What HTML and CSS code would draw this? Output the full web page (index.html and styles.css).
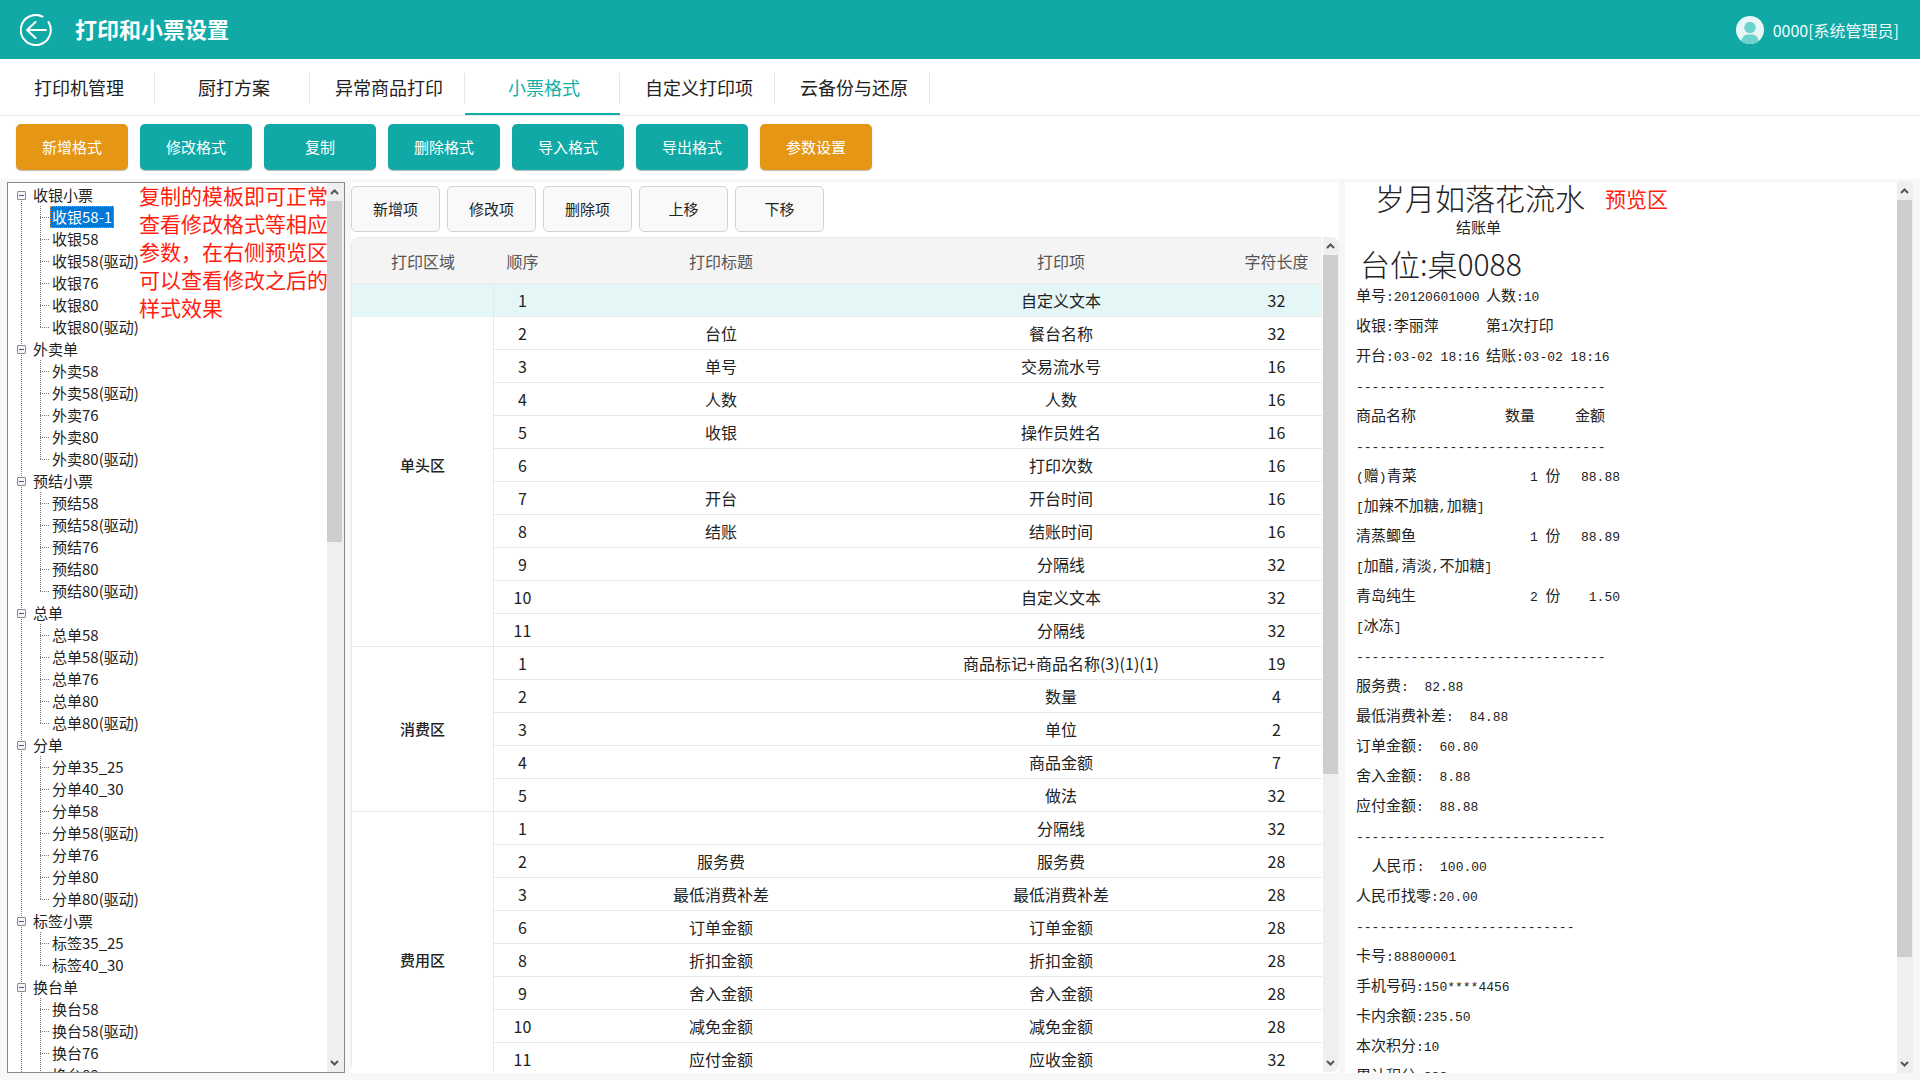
FILE: index.html
```html
<!DOCTYPE html>
<html lang="zh-CN">
<head>
<meta charset="utf-8">
<title>打印和小票设置</title>
<link rel="stylesheet" href="styles.css">
</head>
<body>
<header class="topbar">
  <button class="back" aria-label="返回">
    <svg width="32" height="32" viewBox="0 0 32 32" fill="none" stroke="currentColor" stroke-width="2" stroke-linecap="round" stroke-linejoin="round"><path d="M22.5 2.6A15 15 0 1 0 28.500 8.100M15.500 8L7 16l8.500 8M7 16h19"/></svg>
  </button>
  <h1>打印和小票设置</h1>
  <div class="user">
    <svg width="28" height="28" viewBox="0 0 28 28"><defs><clipPath id="disc"><circle cx="14" cy="14" r="14"/></clipPath></defs><circle cx="14" cy="14" r="14" fill="#e9f6f6"/><g clip-path="url(#disc)" fill="#6dd3cd"><circle cx="14" cy="11.500" r="5.700"/><path d="M5 28c0-6 3-9.500 6.500-9.500h5C20 18.500 23 22 23 28z"/></g></svg>
    <span>0000[系统管理员]</span>
  </div>
</header>

<nav class="tabs">
  <a href="#">打印机管理</a>
  <a href="#">厨打方案</a>
  <a href="#">异常商品打印</a>
  <a href="#" class="active">小票格式</a>
  <a href="#">自定义打印项</a>
  <a href="#">云备份与还原</a>
</nav>

<div class="toolbar">
  <button class="accent">新增格式</button>
  <button>修改格式</button>
  <button>复制</button>
  <button>删除格式</button>
  <button>导入格式</button>
  <button>导出格式</button>
  <button class="accent">参数设置</button>
</div>

<main class="workspace">
  <section class="tree-panel">
    <ul class="tree">
      <li><div class="node"><button class="toggle" aria-label="收起"></button>收银小票</div>
        <ul><li><span class="selected">收银58-1</span></li><li>收银58</li><li>收银58(驱动)</li><li>收银76</li><li>收银80</li><li>收银80(驱动)</li></ul></li>
      <li><div class="node"><button class="toggle" aria-label="收起"></button>外卖单</div>
        <ul><li>外卖58</li><li>外卖58(驱动)</li><li>外卖76</li><li>外卖80</li><li>外卖80(驱动)</li></ul></li>
      <li><div class="node"><button class="toggle" aria-label="收起"></button>预结小票</div>
        <ul><li>预结58</li><li>预结58(驱动)</li><li>预结76</li><li>预结80</li><li>预结80(驱动)</li></ul></li>
      <li><div class="node"><button class="toggle" aria-label="收起"></button>总单</div>
        <ul><li>总单58</li><li>总单58(驱动)</li><li>总单76</li><li>总单80</li><li>总单80(驱动)</li></ul></li>
      <li><div class="node"><button class="toggle" aria-label="收起"></button>分单</div>
        <ul><li>分单35_25</li><li>分单40_30</li><li>分单58</li><li>分单58(驱动)</li><li>分单76</li><li>分单80</li><li>分单80(驱动)</li></ul></li>
      <li><div class="node"><button class="toggle" aria-label="收起"></button>标签小票</div>
        <ul><li>标签35_25</li><li>标签40_30</li></ul></li>
      <li><div class="node"><button class="toggle" aria-label="收起"></button>换台单</div>
        <ul class="more"><li>换台58</li><li>换台58(驱动)</li><li>换台76</li><li>换台80</li></ul></li>
    </ul>
    <p class="note tree-note">复制的模板即可正常查看修改格式等相应参数，在右侧预览区可以查看修改之后的样式效果</p>
    <div class="scrollbar">
      <svg viewBox="0 0 15 18"><path d="M4 11l3.500-3.500L11 11"/></svg>
      <div class="track"><div class="thumb" style="height:40%"></div></div>
      <svg viewBox="0 0 15 18"><path d="M4 7l3.500 3.500L11 7"/></svg>
    </div>
  </section>

  <section class="items-panel">
    <div class="item-actions">
      <button>新增项</button><button>修改项</button><button>删除项</button><button>上移</button><button>下移</button>
    </div>
    <div class="grid-wrap">
      <div class="grid-view">
        <table>
          <colgroup><col class="c-area"><col class="c-order"><col><col><col class="c-len"></colgroup>
          <thead><tr><th>打印区域</th><th>顺序</th><th>打印标题</th><th>打印项</th><th>字符长度</th></tr></thead>
          <tbody>
            <tr class="current"><th rowspan="11" class="area-current">单头区</th><td>1</td><td></td><td>自定义文本</td><td>32</td></tr>
            <tr><td>2</td><td>台位</td><td>餐台名称</td><td>32</td></tr>
            <tr><td>3</td><td>单号</td><td>交易流水号</td><td>16</td></tr>
            <tr><td>4</td><td>人数</td><td>人数</td><td>16</td></tr>
            <tr><td>5</td><td>收银</td><td>操作员姓名</td><td>16</td></tr>
            <tr><td>6</td><td></td><td>打印次数</td><td>16</td></tr>
            <tr><td>7</td><td>开台</td><td>开台时间</td><td>16</td></tr>
            <tr><td>8</td><td>结账</td><td>结账时间</td><td>16</td></tr>
            <tr><td>9</td><td></td><td>分隔线</td><td>32</td></tr>
            <tr><td>10</td><td></td><td>自定义文本</td><td>32</td></tr>
            <tr><td>11</td><td></td><td>分隔线</td><td>32</td></tr>
          </tbody>
          <tbody>
            <tr><th rowspan="5">消费区</th><td>1</td><td></td><td>商品标记+商品名称(3)(1)(1)</td><td>19</td></tr>
            <tr><td>2</td><td></td><td>数量</td><td>4</td></tr>
            <tr><td>3</td><td></td><td>单位</td><td>2</td></tr>
            <tr><td>4</td><td></td><td>商品金额</td><td>7</td></tr>
            <tr><td>5</td><td></td><td>做法</td><td>32</td></tr>
          </tbody>
          <tbody>
            <tr><th rowspan="9">费用区</th><td>1</td><td></td><td>分隔线</td><td>32</td></tr>
            <tr><td>2</td><td>服务费</td><td>服务费</td><td>28</td></tr>
            <tr><td>3</td><td>最低消费补差</td><td>最低消费补差</td><td>28</td></tr>
            <tr><td>6</td><td>订单金额</td><td>订单金额</td><td>28</td></tr>
            <tr><td>8</td><td>折扣金额</td><td>折扣金额</td><td>28</td></tr>
            <tr><td>9</td><td>舍入金额</td><td>舍入金额</td><td>28</td></tr>
            <tr><td>10</td><td>减免金额</td><td>减免金额</td><td>28</td></tr>
            <tr><td>11</td><td>应付金额</td><td>应收金额</td><td>32</td></tr>
            <tr><td></td><td></td><td></td><td></td></tr>
          </tbody>
        </table>
      </div>
      <div class="scrollbar">
        <svg viewBox="0 0 15 18"><path d="M4 11l3.500-3.500L11 11"/></svg>
        <div class="track"><div class="thumb" style="height:65%"></div></div>
        <svg viewBox="0 0 15 18"><path d="M4 7l3.500 3.500L11 7"/></svg>
      </div>
    </div>
  </section>

  <section class="preview-panel">
    <div class="receipt">
      <div class="shop"><span class="large">岁月如落花流水</span><span class="note">预览区</span></div>
      <div class="caption">结账单</div>
      <div class="desk large">台位:桌0088</div>
      <div class="pair"><span>单号<i>:20120601000</i></span><span>人数<i>:10</i></span></div>
      <div class="pair"><span>收银<i>:</i>李丽萍</span><span>第<i>1</i>次打印</span></div>
      <div class="pair"><span>开台<i>:03-02 18:16</i></span><span>结账<i>:03-02 18:16</i></span></div>
      <div><i>--------------------------------</i></div>
      <div class="goods head"><span>商品名称</span><span>数量</span><span>金额</span></div>
      <div><i>--------------------------------</i></div>
      <div class="goods"><span><i>(</i>赠<i>)</i>青菜</span><span><i>1 </i>份</span><span><i>88.88</i></span></div>
      <div><i>[</i>加辣不加糖<i>,</i>加糖<i>]</i></div>
      <div class="goods"><span>清蒸鲫鱼</span><span><i>1 </i>份</span><span><i>88.89</i></span></div>
      <div><i>[</i>加醋<i>,</i>清淡<i>,</i>不加糖<i>]</i></div>
      <div class="goods"><span>青岛纯生</span><span><i>2 </i>份</span><span><i>1.50</i></span></div>
      <div><i>[</i>冰冻<i>]</i></div>
      <div><i>--------------------------------</i></div>
      <div>服务费<i>:  82.88</i></div>
      <div>最低消费补差<i>:  84.88</i></div>
      <div>订单金额<i>:  60.80</i></div>
      <div>舍入金额<i>:  8.88</i></div>
      <div>应付金额<i>:  88.88</i></div>
      <div><i>--------------------------------</i></div>
      <div><i>  </i>人民币<i>:  100.00</i></div>
      <div>人民币找零<i>:20.00</i></div>
      <div><i>----------------------------</i></div>
      <div>卡号<i>:88800001</i></div>
      <div>手机号码<i>:150****4456</i></div>
      <div>卡内余额<i>:235.50</i></div>
      <div>本次积分<i>:10</i></div>
      <div>累计积分<i>:888</i></div>
    </div>
    <div class="scrollbar">
      <svg viewBox="0 0 15 18"><path d="M4 11l3.500-3.500L11 11"/></svg>
      <div class="track"><div class="thumb" style="height:88.500%"></div></div>
      <svg viewBox="0 0 15 18"><path d="M4 7l3.500 3.500L11 7"/></svg>
    </div>
  </section>
</main>
</body>
</html>
```

FILE: styles.css
```css
* { box-sizing: border-box; margin: 0; padding: 0; }

body {
  display: flex;
  flex-direction: column;
  height: 100vh;
  overflow: hidden;
  background: #fff;
  color: #222;
  font: 16px/24px "Noto Sans CJK SC", sans-serif;
}

button { font: inherit; border: 0; background: none; cursor: pointer; }
ul { list-style: none; }
a { color: inherit; text-decoration: none; }

/* header */
.topbar {
  display: flex;
  align-items: center;
  flex: none;
  height: 59px;
  padding: 0 21px 0 20px;
  background: #11a9a5;
  color: #fff;
}
.back { width: 32px; height: 32px; color: #fff; }
.back svg { display: block; }
.topbar h1 { margin-left: 23px; padding-bottom: 4px; font-size: 22px; line-height: 32px; font-weight: 700; }
.user { display: flex; align-items: center; gap: 9px; margin-left: auto; color: #eefafa; }

/* tabs */
.tabs {
  display: flex;
  flex: none;
  height: 57px;
  border-bottom: 1px solid #e5e5e5;
  font-size: 18px;
}
.tabs a {
  width: 155px;
  padding-left: 3px;
  line-height: 56px;
  text-align: center;
  background: linear-gradient(#e6e6e6, #e6e6e6) right 14px / 1px 31px no-repeat;
}
.tabs .active { color: #11b0a8; border-bottom: 2px solid #11b0a8; }

/* toolbar */
.toolbar { display: flex; flex: none; gap: 12px; height: 63px; padding: 8px 16px; }
.toolbar button {
  width: 112px;
  height: 46px;
  border-radius: 5px;
  background: #11a9a5;
  box-shadow: 0 1px 1px #bbb;
  color: #fff;
  font-size: 15px;
}
.toolbar .accent { background: #e59614; }

/* three panels */
.workspace {
  display: grid;
  flex: 1;
  grid-template-columns: 338px minmax(0, 988fr) minmax(0, 568fr);
  grid-template-rows: minmax(0, 1fr);
  gap: 6px;
  min-height: 0;
  padding: 3px 7px 7px;
  background: #f7f7f7;
}
.workspace > section { background: #fff; overflow: hidden; }

.scrollbar { display: flex; flex: none; flex-direction: column; width: 16px; background: #efefef; }
.scrollbar svg { flex: none; width: 15px; height: 18px; fill: none; stroke: #555; stroke-width: 2; }
.track { flex: 1; }
.thumb { width: 15px; background: #cdcdcd; }

.note { color: #ff1e10; font-size: 21px; line-height: 28px; }

/* format tree */
.workspace > .tree-panel { position: relative; display: flex; border: 1px solid #828790; }
.tree-panel .scrollbar { width: 17px; }
.tree {
  flex: 1;
  padding-top: 1px;
  font-size: 15px;
  line-height: 22px;
  background: repeating-linear-gradient(#777 0 1px, transparent 1px 2px) 13px 14px / 1px 100% no-repeat;
}
.node { display: flex; align-items: center; height: 22px; padding-left: 9px; }
.toggle {
  width: 9px;
  height: 9px;
  margin-right: 7px;
  border: 1px solid #8a8a8a;
  border-radius: 1px;
  background: linear-gradient(#3b5aa8, #3b5aa8) center / 5px 1px no-repeat #f4f4f4;
}
.tree ul { padding-left: 32px; }
.tree ul li {
  height: 22px;
  padding-left: 12px;
  background:
    repeating-linear-gradient(#777 0 1px, transparent 1px 2px) 0 0 / 1px 100% no-repeat,
    repeating-linear-gradient(90deg, #777 0 1px, transparent 1px 2px) 0 11px / 9px 1px no-repeat;
}
.tree ul:not(.more) li:last-child { background-size: 1px 11px, 9px 1px; }
.selected {
  display: inline-block;
  height: 22px;
  margin-left: -2px;
  padding: 0 1px;
  border: 1px dotted #ff8728;
  background: #0078d7;
  color: #fff;
  line-height: 20px;
}
.tree-note { position: absolute; top: -2px; left: 131px; width: 190px; }

/* item table */
.items-panel { display: flex; flex-direction: column; }
.item-actions { display: flex; gap: 7px; padding: 4px 0 5px; }
.item-actions button {
  width: 89px;
  height: 46px;
  border: 1px solid #d3d3d3;
  border-radius: 5px;
  background: #f9f9f9;
  color: #222;
  font-size: 15px;
}
.grid-wrap {
  display: flex;
  flex: 1;
  min-height: 0;
  margin-bottom: 1px;
  border-radius: 8px;
  overflow: hidden;
}
.grid-view { flex: 1; overflow: hidden; border: solid #e8e8e8; border-width: 1px 0 0 1px; }
.grid-wrap .scrollbar { margin-left: 1px; }
table { width: 100%; table-layout: fixed; border-collapse: separate; border-spacing: 0; text-align: center; }
.c-area { width: 142px; }
.c-order { width: 57px; }
.c-len { width: 91px; }
td, th { border-bottom: 1px solid #e8e8e8; }
thead th { height: 46px; background: #f4f4f4; color: #555; font-weight: 400; }
td { height: 33px; }
tbody th { border-right: 1px solid #e8e8e8; font-size: 15px; font-weight: 500; }
.current td { background: #e4f6f6; }
.area-current { background: linear-gradient(#e4f6f6, #e4f6f6) 0 0 / 100% 33px no-repeat; }

/* receipt preview */
.preview-panel { display: flex; }
.receipt {
  flex: 1;
  padding-left: 11px;
  overflow: hidden;
  font-size: 15px;
  line-height: 30px;
}
.receipt > div { height: 30px; }
.receipt i { font: 13px/30px "Liberation Mono", monospace; white-space: pre; }
.receipt .large { font: 300 30px/30px "Noto Sans CJK SC", sans-serif; }
.receipt .shop { display: flex; gap: 20px; padding-left: 19px; }
.shop .note { line-height: 32px; }
.receipt .caption { padding-left: 100px; }
.receipt .desk { height: 38px; padding: 6px 0 0 4px; }
.pair { display: grid; grid-template-columns: 130px 1fr; }
.goods { display: grid; grid-template-columns: 174px 45px 45px; }
.goods span:last-child { text-align: right; }
.goods.head { grid-template-columns: 149px 70px 45px; }
.goods.head span:last-child { text-align: left; }
```
